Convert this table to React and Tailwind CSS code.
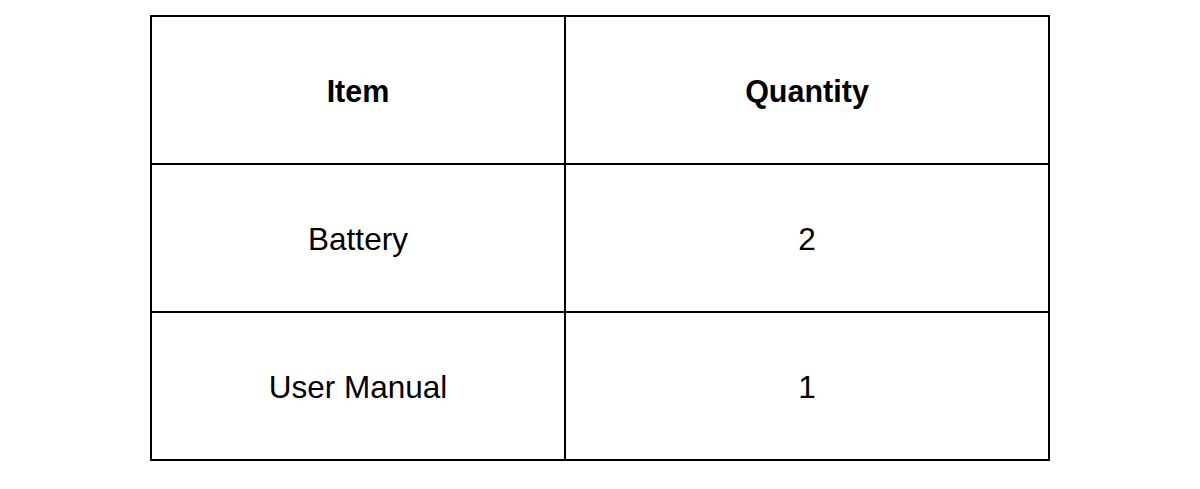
import React from 'react';

const rows = [
  { item: 'Battery', qty: 2 },
  { item: 'User Manual', qty: 1 },
];

export default function App()
{
  return (
    <div className="w-[1200px] h-[489px] bg-white pt-[15px]" style={{ fontFamily: '"Liberation Sans", Arial, sans-serif' }}>
      <table className="mx-auto w-[900px] border-collapse border-2 border-black text-black">
        <thead>
          <tr className="h-[148px]">
            <th className="w-[414px] border-2 border-black pt-1 text-center text-[30.5px] font-bold">Item</th>
            <th className="border-2 border-black pt-1 text-center text-[30.5px] font-bold">Quantity</th>
          </tr>
        </thead>
        <tbody>
          {rows.map(row => (
            <tr key={row.item} className="h-[148px]">
              <td className="border-2 border-black pt-1 text-center text-[31.5px]">{row.item}</td>
              <td className="border-2 border-black pt-1 text-center text-[31.5px]">{row.qty}</td>
            </tr>
          ))}
        </tbody>
      </table>
    </div>
  );
}
